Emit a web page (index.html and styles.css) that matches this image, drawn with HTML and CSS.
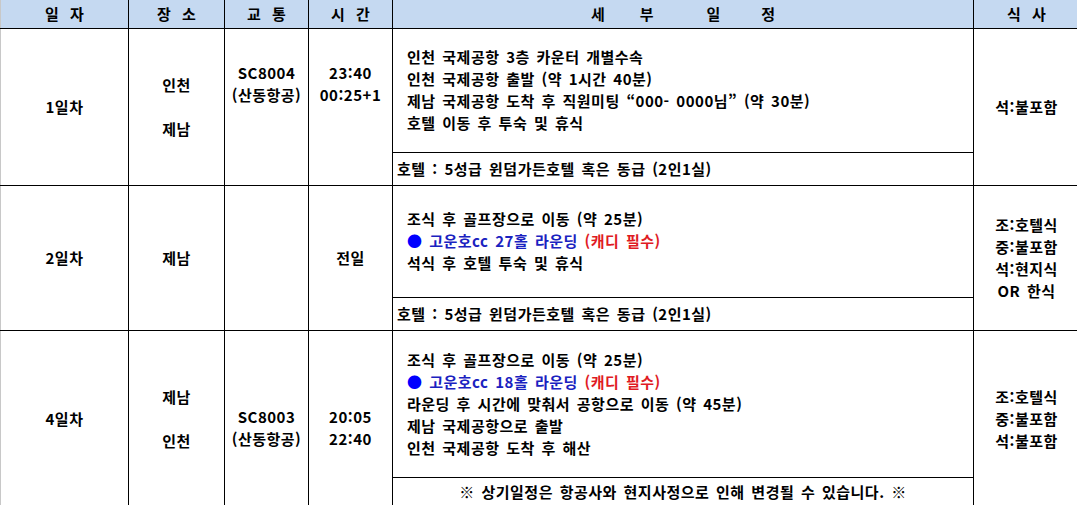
FILE: index.html
```html
<!DOCTYPE html>
<html lang="ko">
<head>
<meta charset="utf-8">
<title>일정표</title>
<link rel="stylesheet" href="styles.css">
</head>
<body>
<table class="sched">
  <colgroup>
    <col class="c-day"><col class="c-place"><col class="c-trans"><col class="c-time"><col class="c-detail"><col class="c-meal">
  </colgroup>
  <thead>
    <tr class="hdr">
      <th>일 자</th>
      <th>장 소</th>
      <th>교 통</th>
      <th>시 간</th>
      <th><span class="hw">세</span><span class="hw g1">부</span><span class="hw g2">일</span><span class="hw g3">정</span></th>
      <th>식 사</th>
    </tr>
  </thead>
  <tbody>
    <tr class="r1a">
      <td rowspan="2" class="mid">1일차</td>
      <td rowspan="2" class="mid">인천<br><br>제남</td>
      <td rowspan="2" class="top pt1">SC8004<br>(산동항공)</td>
      <td rowspan="2" class="top pt1">23:40<br>00:25+1</td>
      <td class="detail">인천 국제공항 3층 카운터 개별수속<br>인천 국제공항 출발 (약 1시간 40분)<br>제남 국제공항 도착 후 직원미팅 “000- 0000님” (약 30분)<br>호텔 이동 후 투숙 및 휴식</td>
      <td rowspan="2" class="mid">석:불포함</td>
    </tr>
    <tr class="r1b">
      <td class="hotel">호텔 : 5성급 윈덤가든호텔 혹은 동급 (2인1실)</td>
    </tr>
    <tr class="r2a">
      <td rowspan="2" class="mid">2일차</td>
      <td rowspan="2" class="mid">제남</td>
      <td rowspan="2" class="mid"></td>
      <td rowspan="2" class="mid">전일</td>
      <td class="detail">조식 후 골프장으로 이동 (약 25분)<br><span class="blue"><span class="dot">●</span> 고운호cc 27홀 라운딩</span> <span class="red">(캐디 필수)</span><br>석식 후 호텔 투숙 및 휴식</td>
      <td rowspan="2" class="mid">조:호텔식<br>중:불포함<br>석:현지식<br>OR 한식</td>
    </tr>
    <tr class="r2b">
      <td class="hotel">호텔 : 5성급 윈덤가든호텔 혹은 동급 (2인1실)</td>
    </tr>
    <tr class="r3a">
      <td rowspan="2" class="mid">4일차</td>
      <td rowspan="2" class="mid">제남<br><br>인천</td>
      <td rowspan="2" class="top pt3">SC8003<br>(산동항공)</td>
      <td rowspan="2" class="top pt3">20:05<br>22:40</td>
      <td class="detail">조식 후 골프장으로 이동 (약 25분)<br><span class="blue"><span class="dot">●</span> 고운호cc 18홀 라운딩</span> <span class="red">(캐디 필수)</span><br>라운딩 후 시간에 맞춰서 공항으로 이동 (약 45분)<br>제남 국제공항으로 출발<br>인천 국제공항 도착 후 해산</td>
      <td rowspan="2" class="mid">조:호텔식<br>중:불포함<br>석:불포함</td>
    </tr>
    <tr class="r3b">
      <td class="note">※ 상기일정은 항공사와 현지사정으로 인해 변경될 수 있습니다. ※</td>
    </tr>
  </tbody>
</table>
</body>
</html>
```

FILE: styles.css
```css
html, body {
  margin: 0;
  padding: 0;
  background: #ffffff;
}

body {
  font-family: "Noto Sans CJK KR", "Noto Sans", sans-serif;
  font-weight: 700;
  font-size: 15px;
  letter-spacing: 0.5px;
  word-spacing: 2px;
  color: #000;
  overflow: hidden;
}

.sched {
  border-collapse: collapse;
  table-layout: fixed;
  width: 1079px;
  border-left: 1px solid #c8c8c8;
}

.c-day { width: 128px; }
.c-place { width: 96px; }
.c-trans { width: 84px; }
.c-time { width: 84px; }
.c-detail { width: 581px; }
.c-meal { width: 106px; }

.sched th,
.sched td {
  border: 1px solid #000;
  padding: 0;
  line-height: 22px;
}

.sched thead th {
  border-top: none;
}

.sched .hdr th:first-child,
.sched tbody td.mid:first-child {
  border-left: none;
}

.hdr {
  height: 28px;
}

.hdr th {
  background: #c5d9f1;
  font-weight: 700;
  font-size: 15px;
  letter-spacing: 0;
  word-spacing: 7px;
  text-align: center;
  vertical-align: middle;
}

.hw {
  display: inline-block;
}

.g1 { margin-left: 35px; }
.g2 { margin-left: 53px; }
.g3 { margin-left: 41px; }

.mid {
  text-align: center;
  vertical-align: middle;
}

.top {
  text-align: center;
  vertical-align: top;
}

.pt1 { padding-top: 33px !important; }
.pt3 { padding-top: 75px !important; }

.r1a { height: 124px; }
.r1b { height: 33px; }
.r2a { height: 112px; }
.r2b { height: 33px; }
.r3a { height: 147px; }
.r3b { height: 30px; }

.detail {
  text-align: left;
  vertical-align: middle;
  padding-left: 14px !important;
}

.hotel {
  text-align: left;
  vertical-align: middle;
  padding-left: 4px !important;
}

.note {
  text-align: center;
  vertical-align: middle;
}

.blue {
  color: #1a22c0;
}

.dot {
  color: #0000ff;
}

.red {
  color: #e01b24;
}
```
